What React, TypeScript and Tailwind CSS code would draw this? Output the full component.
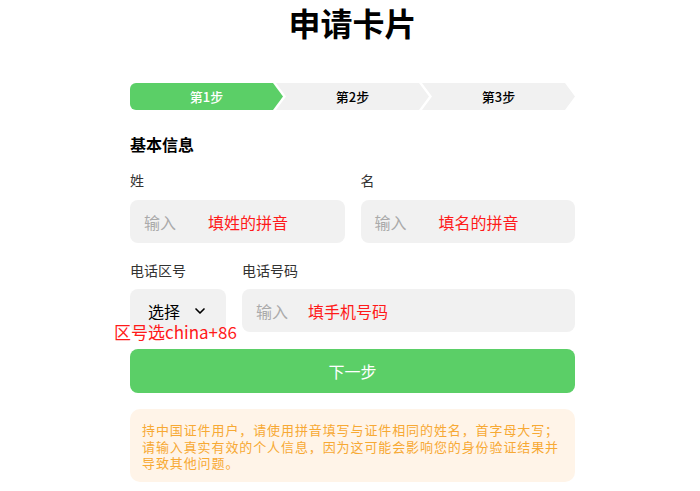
import { ChevronDown } from 'lucide-react';

const font = { fontFamily: '"Noto Sans CJK SC", "Noto Sans", sans-serif' };

function Steps() {
  const first = 'polygon(0 0, calc(100% - 10px) 0, 100% 50%, calc(100% - 10px) 100%, 0 100%)';
  const rest = 'polygon(0 0, calc(100% - 10px) 0, 100% 50%, calc(100% - 10px) 100%, 0 100%, 10px 50%)';
  return (
    <div className="flex h-[27px]">
      <div
        className="w-[153px] h-full rounded-l-[6px] bg-[#5bcf67] text-white text-[13px] font-medium flex items-center justify-center"
        style={{ clipPath: first }}
      >
        第1步
      </div>
      <div
        className="w-[153px] -ml-[7px] h-full bg-[#f1f1f1] text-black text-[13px] font-medium flex items-center justify-center"
        style={{ clipPath: rest }}
      >
        第2步
      </div>
      <div
        className="w-[153px] -ml-[7px] h-full bg-[#f1f1f1] text-black text-[13px] font-medium flex items-center justify-center"
        style={{ clipPath: rest }}
      >
        第3步
      </div>
    </div>
  );
}

function Field({ note, wide = true }: { note: string; wide?: boolean }) {
  return (
    <div className="h-[43px] rounded-[8px] bg-[#f1f1f1] flex items-center pl-[14px] text-[16px]">
      <span className={wide ? 'text-[#aaaaaa] w-[64px]' : 'text-[#aaaaaa] w-[52px]'}>输入</span>
      <span className="text-[#ff1a1a]">{note}</span>
    </div>
  );
}

export default function App() {
  return (
    <div className="w-[700px] h-[491px] bg-white overflow-hidden" style={font}>
      <div className="w-[445px] ml-[130px]">
        <h1 className="h-[44px] leading-[44px] text-[32px] font-bold text-black text-center">申请卡片</h1>
        <div className="mt-[39px]">
          <Steps />
        </div>

        <h2 className="mt-[22px] h-[24px] leading-[24px] text-[16px] font-bold text-black">基本信息</h2>

        <div className="mt-[14px] grid grid-cols-2 gap-x-[16px]">
          <div>
            <div className="h-[20px] leading-[20px] text-[14px] text-[#333]">姓</div>
            <div className="mt-[10px]">
              <Field note="填姓的拼音" />
            </div>
          </div>
          <div>
            <div className="h-[20px] leading-[20px] text-[14px] text-[#333]">名</div>
            <div className="mt-[10px]">
              <Field note="填名的拼音" />
            </div>
          </div>
        </div>

        <div className="mt-[17px] flex gap-[16px]">
          <div className="w-[96px]">
            <div className="h-[20px] leading-[20px] text-[14px] text-[#333]">电话区号</div>
            <div className="relative mt-[9px] h-[43px] rounded-[8px] bg-[#f1f1f1] flex items-center pl-[18px] text-[16px] text-black">
              <span>选择</span>
              <ChevronDown className="ml-[12px] w-[16px] h-[16px]" strokeWidth={2.5} />
              <span className="absolute left-[-16px] top-[33px] whitespace-nowrap text-[17px] leading-[20px] text-[#ff1a1a]">
                区号选china+86
              </span>
            </div>
          </div>
          <div className="flex-1">
            <div className="h-[20px] leading-[20px] text-[14px] text-[#333]">电话号码</div>
            <div className="mt-[9px]">
              <Field note="填手机号码" wide={false} />
            </div>
          </div>
        </div>

        <button
          type="button"
          className="mt-[17px] w-full h-[44px] rounded-[8px] bg-[#5bcf67] text-white text-[16px]"
        >
          下一步
        </button>

        <div className="mt-[16px] h-[73px] rounded-[10px] bg-[#fff4e8] px-[12px] pt-[13px] text-[13px] tracking-[0.9px] leading-[16.5px] text-[#f7a934] whitespace-nowrap">
          持中国证件用户，请使用拼音填写与证件相同的姓名，首字母大写；
          <br />
          请输入真实有效的个人信息，因为这可能会影响您的身份验证结果并
          <br />
          导致其他问题。
        </div>
      </div>
    </div>
  );
}
